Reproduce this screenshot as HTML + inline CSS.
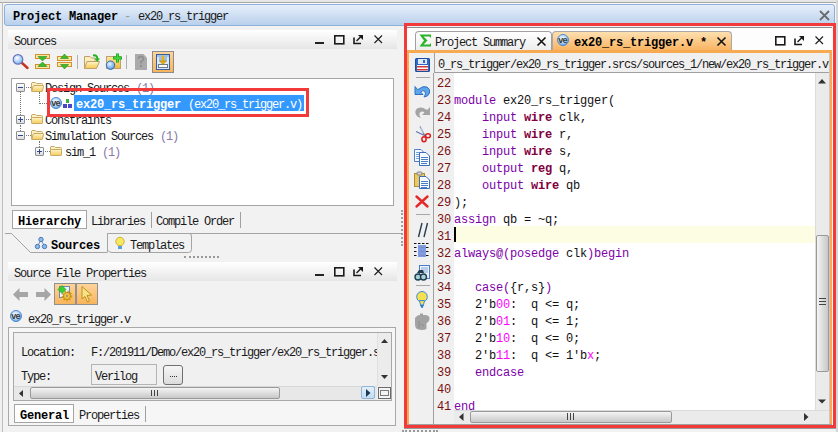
<!DOCTYPE html>
<html><head><meta charset="utf-8">
<style>
*{margin:0;padding:0;box-sizing:border-box}
html,body{width:838px;height:432px;overflow:hidden;background:#f0f0f0}
body{position:relative;font-family:"Liberation Mono",monospace;font-size:12px;color:#000}
.a{position:absolute}
.t{position:absolute;font:12px/12px "Liberation Mono",monospace;letter-spacing:-1.2px;white-space:pre;color:#1a1a1a}
.b{font-weight:bold;letter-spacing:-0.2px;color:#000}
.c{position:absolute;font:12px/12px "Liberation Mono",monospace;letter-spacing:-0.2px;white-space:pre;color:#111}
.ln{color:#7a1010;}
.kw{color:#7d00a8}
.kb{color:#800040;font-weight:bold}
.mg{color:#ff00ff}
.hdr{position:absolute;background:linear-gradient(#ffffff,#e6e6e6);}
svg{position:absolute;overflow:visible}
</style></head><body>
<svg width="0" height="0" style="position:absolute"><defs><radialGradient id="veg" cx="0.45" cy="0.4" r="0.6"><stop offset="0" stop-color="#ffffff"/><stop offset="0.6" stop-color="#b8daf8"/><stop offset="1" stop-color="#5a9ae0"/></radialGradient><linearGradient id="fgo" x1="0" y1="0" x2="0" y2="1"><stop offset="0" stop-color="#fff4c8"/><stop offset="1" stop-color="#f4cc58"/></linearGradient></defs></svg>

<!-- outer chrome -->
<div class="a" style="left:0;top:0;width:838px;height:2px;background:#e6e6e6"></div>
<div class="a" style="left:0;top:2px;width:838px;height:1px;background:#a8a8a8"></div>
<div class="a" style="left:2px;top:2px;width:1px;height:430px;background:#bdbdbd"></div>
<div class="a" style="left:3px;top:3px;width:833px;height:429px;background:#f2f2f2"></div><div class="a" style="left:3px;top:3px;width:833px;height:1px;background:#fdfdfd"></div>

<div class="a" style="left:836px;top:0;width:2px;height:432px;background:#d6d6d6"></div>
<!-- title box -->
<div class="a" style="left:4px;top:4px;width:831px;height:22px;border:1px solid #8fb0da;border-radius:3px;background:linear-gradient(#e6effa,#b9d0ec)"></div>
<div class="t b" style="left:13px;top:11px">Project Manager</div>
<div class="t" style="left:124px;top:11px;color:#9a9a9a">-</div>
<div class="t" style="left:138px;top:11px">ex20_rs_trigger</div>
<svg style="left:819px;top:10px" width="11" height="11"><path d="M1 1L10 10M10 1L1 10" stroke="#6b6b6b" stroke-width="1.8"/></svg>

<!-- ============ LEFT: Sources panel ============ -->
<div class="hdr" style="left:8px;top:30px;width:389px;height:19px"></div>
<div class="t" style="left:14px;top:36px">Sources</div>
<!-- header buttons -->
<div class="a" style="left:315px;top:42px;width:9px;height:2px;background:#222"></div>
<svg style="left:334px;top:35px" width="11" height="10"><rect x="0.8" y="0.8" width="9" height="8" fill="none" stroke="#1a1a1a" stroke-width="1.6"/></svg>
<svg style="left:353px;top:35px" width="11" height="10"><path d="M1 2.5V8.5H8" fill="none" stroke="#1a1a1a" stroke-width="1.6"/><path d="M3.5 6L8 1.5" stroke="#1a1a1a" stroke-width="1.4"/><path d="M5 0H10V5Z" fill="#1a1a1a"/></svg>
<svg style="left:374px;top:35px" width="9" height="9"><path d="M0.5 0.5L8 8M8 0.5L0.5 8" stroke="#1a1a1a" stroke-width="1.1"/></svg>

<!-- toolbar -->
<svg style="left:12px;top:53px" width="18" height="17"><defs><radialGradient id="mg1" cx="0.4" cy="0.35" r="0.7"><stop offset="0" stop-color="#ffffff"/><stop offset="1" stop-color="#6fb0ec"/></radialGradient></defs><path d="M9.5 9.5L15.5 15" stroke="#c83020" stroke-width="2.4" stroke-linecap="round"/><circle cx="6" cy="6.4" r="4.8" fill="url(#mg1)" stroke="#6a74c0" stroke-width="1.2"/></svg>
<svg style="left:35px;top:53px" width="16" height="17"><rect x="0.5" y="1.5" width="14" height="4" fill="#fde7a0" stroke="#d0922e"/><rect x="0.5" y="11.5" width="14" height="4" fill="#fde7a0" stroke="#d0922e"/><path d="M3 3.5H12L7.5 8Z" fill="#3cbc2c" stroke="#2a8a1a" stroke-width="0.6"/><path d="M3 13.5H12L7.5 9Z" fill="#3cbc2c" stroke="#2a8a1a" stroke-width="0.6"/></svg>
<svg style="left:57px;top:53px" width="16" height="17"><rect x="0.5" y="3.5" width="14" height="4" fill="#fde7a0" stroke="#d0922e"/><rect x="0.5" y="9.5" width="14" height="4" fill="#fde7a0" stroke="#d0922e"/><path d="M3.5 5.5H11.5L7.5 1Z" fill="#3cbc2c" stroke="#2a8a1a" stroke-width="0.6"/><path d="M3.5 11.5H11.5L7.5 16Z" fill="#3cbc2c" stroke="#2a8a1a" stroke-width="0.6"/></svg>
<div class="a" style="left:77px;top:55px;width:1px;height:14px;background:#b0b0b0"></div>
<svg style="left:84px;top:54px" width="17" height="16"><defs><linearGradient id="fg1" x1="0" y1="0" x2="0" y2="1"><stop offset="0" stop-color="#fff6c8"/><stop offset="1" stop-color="#f6c850"/></linearGradient></defs><path d="M0.5 2.5H6L7.5 4H11V14.5H0.5Z" fill="#fbeeb8" stroke="#bfa070"/><path d="M3 7.5H15.5L12.5 14.5H0.5Z" fill="url(#fg1)" stroke="#bfa070"/><path d="M9 1.5Q13 0.5 13.5 5" fill="none" stroke="#22b422" stroke-width="2"/><path d="M10.5 4.5H16L13.3 8Z" fill="#22b422"/></svg>
<svg style="left:105px;top:53px" width="18" height="17"><defs><linearGradient id="fg2" x1="0" y1="0" x2="0" y2="1"><stop offset="0" stop-color="#fbe9a0"/><stop offset="1" stop-color="#f0b838"/></linearGradient><radialGradient id="bg2" cx="0.4" cy="0.35" r="0.7"><stop offset="0" stop-color="#e8f4ff"/><stop offset="1" stop-color="#4e98e8"/></radialGradient></defs><rect x="1.5" y="3.5" width="14" height="12" fill="url(#fg2)" stroke="#c0a070"/><circle cx="5.5" cy="12.2" r="4.2" fill="url(#bg2)" stroke="#3a68b0"/><path d="M12.5 0.5V9.5M8 5H17" stroke="#1a9a1a" stroke-width="3"/><path d="M12.5 1V9M8.5 5H16.5" stroke="#3ce03c" stroke-width="1.6"/></svg>
<div class="a" style="left:126px;top:55px;width:1px;height:14px;background:#b0b0b0"></div>
<svg style="left:135px;top:54px" width="13" height="16"><path d="M0 0H8.5L12 4V16H0Z" fill="#aaaaaa"/><path d="M3.5 5Q3.5 2.5 6 2.5Q8.5 2.5 8.5 5Q8.5 6.5 6 7.5V9.5" fill="none" stroke="#8e8e8e" stroke-width="1.6"/><rect x="5" y="11" width="2" height="2" fill="#8e8e8e"/></svg>
<div class="a" style="left:152px;top:51px;width:22px;height:22px;background:linear-gradient(#fdd49a,#f9b45c);border:1px solid #8c8c8c"></div>
<svg style="left:156px;top:54px" width="14" height="16"><rect x="0.5" y="0.5" width="13" height="15" fill="#d6ecfa" stroke="#3c5c9c"/><rect x="1" y="1" width="12" height="2" fill="#9cc4e8"/><path d="M3 4H11M3 6H11" stroke="#7090b8"/><rect x="2.5" y="10.5" width="9" height="3" fill="#fff" stroke="#6a7a8a"/><path d="M7 1.5V8" stroke="#e8b010" stroke-width="2.2"/><path d="M3.5 7H10.5L7 10.5Z" fill="#e8b010" stroke="#b88008" stroke-width="0.6"/></svg>

<!-- tree box -->
<div class="a" style="left:11px;top:78px;width:383px;height:128px;background:#fff;border:1px solid #a5a5a5"></div>
<!-- dotted lines -->
<div class="a" style="left:20px;top:92px;width:1px;height:23px;border-left:1px dotted #777"></div>
<div class="a" style="left:26px;top:87px;width:5px;border-top:1px dotted #777"></div>
<div class="a" style="left:26px;top:119px;width:5px;border-top:1px dotted #777"></div>
<div class="a" style="left:20px;top:125px;width:1px;height:6px;border-left:1px dotted #777"></div>
<div class="a" style="left:26px;top:135px;width:5px;border-top:1px dotted #777"></div>
<div class="a" style="left:39px;top:92px;width:1px;height:12px;border-left:1px dotted #777"></div>
<div class="a" style="left:39px;top:103px;width:10px;border-top:1px dotted #777"></div>
<div class="a" style="left:39px;top:141px;width:1px;height:6px;border-left:1px dotted #777"></div>
<div class="a" style="left:45px;top:151px;width:5px;border-top:1px dotted #777"></div>
<!-- expanders -->
<div class="a" style="left:16px;top:83px;width:9px;height:9px;border:1px solid #8e8f8f;background:linear-gradient(#fff,#dcdcdc);border-radius:1px"></div>
<div class="a" style="left:18px;top:87px;width:5px;height:1px;background:#2c4a8c"></div>
<div class="a" style="left:16px;top:115px;width:9px;height:9px;border:1px solid #8e8f8f;background:linear-gradient(#fff,#dcdcdc);border-radius:1px"></div>
<div class="a" style="left:18px;top:119px;width:5px;height:1px;background:#2c4a8c"></div>
<div class="a" style="left:20px;top:117px;width:1px;height:5px;background:#2c4a8c"></div>
<div class="a" style="left:16px;top:131px;width:9px;height:9px;border:1px solid #8e8f8f;background:linear-gradient(#fff,#dcdcdc);border-radius:1px"></div>
<div class="a" style="left:18px;top:135px;width:5px;height:1px;background:#2c4a8c"></div>
<div class="a" style="left:35px;top:147px;width:9px;height:9px;border:1px solid #8e8f8f;background:linear-gradient(#fff,#dcdcdc);border-radius:1px"></div>
<div class="a" style="left:37px;top:151px;width:5px;height:1px;background:#2c4a8c"></div>
<div class="a" style="left:39px;top:149px;width:1px;height:5px;background:#2c4a8c"></div>
<!-- folders -->
<svg style="left:31px;top:81px" width="13" height="11"><path d="M1 1.5H4.5L5.5 2.5H10.5Q11.5 2.5 11.5 3.5V9.5Q11.5 10.5 10.5 10.5H1.5Q0.5 10.5 0.5 9.5V2Z" fill="#fbf0c0" stroke="#c8aa68"/><path d="M3 4.5H12Q12.8 4.5 12.5 5.5L11.5 9.8Q11.3 10.5 10.5 10.5H0.8L2.2 5.2Q2.4 4.5 3 4.5Z" fill="url(#fgo)" stroke="#c8aa68"/></svg>
<svg style="left:31px;top:113px" width="13" height="11"><path d="M1 1.5H4.5L5.5 2.5H10.5Q11.5 2.5 11.5 3.5V9.5Q11.5 10.5 10.5 10.5H1.5Q0.5 10.5 0.5 9.5V2Z" fill="#fbf0c0" stroke="#c8aa68"/><rect x="0.5" y="4.5" width="11" height="6" rx="1" fill="url(#fgo)" stroke="#c8aa68"/></svg>
<svg style="left:31px;top:129px" width="13" height="11"><path d="M1 1.5H4.5L5.5 2.5H10.5Q11.5 2.5 11.5 3.5V9.5Q11.5 10.5 10.5 10.5H1.5Q0.5 10.5 0.5 9.5V2Z" fill="#fbf0c0" stroke="#c8aa68"/><path d="M3 4.5H12Q12.8 4.5 12.5 5.5L11.5 9.8Q11.3 10.5 10.5 10.5H0.8L2.2 5.2Q2.4 4.5 3 4.5Z" fill="url(#fgo)" stroke="#c8aa68"/></svg>
<svg style="left:50px;top:145px" width="13" height="11"><path d="M1 1.5H4.5L5.5 2.5H10.5Q11.5 2.5 11.5 3.5V9.5Q11.5 10.5 10.5 10.5H1.5Q0.5 10.5 0.5 9.5V2Z" fill="#fbf0c0" stroke="#c8aa68"/><rect x="0.5" y="4.5" width="11" height="6" rx="1" fill="url(#fgo)" stroke="#c8aa68"/></svg>
<!-- tree text -->
<div class="t" style="left:45px;top:83px">Design Sources <span style="color:#8a7aa8;margin-left:1px">(1)</span></div>
<div class="t" style="left:45px;top:115px">Constraints</div>
<div class="t" style="left:45px;top:131px">Simulation Sources <span style="color:#8a7aa8;margin-left:1px">(1)</span></div>
<div class="t" style="left:65px;top:147px">sim_1 <span style="color:#8a7aa8;margin-left:1px">(1)</span></div>
<!-- selected row -->
<svg style="left:50px;top:97px" width="13" height="12"><circle cx="6" cy="6" r="5.5" fill="url(#veg)" stroke="#4f8ad0"/><text x="1.2" y="9.2" font-size="9" font-family="Liberation Sans" font-weight="bold" fill="#3a3a3a" letter-spacing="-0.6">ve</text></svg>
<svg style="left:63px;top:99px" width="10" height="10"><rect x="3" y="0" width="3" height="4" fill="#3cb43c"/><rect x="0" y="5" width="4" height="4" fill="#4848c8"/><rect x="5" y="5" width="4" height="4" fill="#4848c8"/></svg>
<div class="a" style="left:74px;top:95px;width:230px;height:16px;background:#3399ff"></div>
<div class="t" style="left:76px;top:99px;color:#fff"><span class="b" style="color:#fff">ex20_rs_trigger</span> <span style="margin-left:1px">(ex20_rs_trigger.v)</span></div>
<div class="a" style="left:47px;top:88px;width:262px;height:29px;border:3px solid #f23a3a"></div>

<!-- tab strip hierarchy -->
<div class="a" style="left:12px;top:210px;width:75px;height:19px;background:#fff;border:1px solid #a5a5a5"></div>
<div class="t b" style="left:18px;top:216px">Hierarchy</div>
<div class="t" style="left:91px;top:216px">Libraries</div>
<div class="a" style="left:151px;top:212px;width:1px;height:16px;background:#a0a0a0"></div>
<div class="t" style="left:156px;top:216px">Compile Order</div>
<div class="a" style="left:240px;top:212px;width:1px;height:16px;background:#a0a0a0"></div>
<div class="a" style="left:3px;top:234px;width:398px;height:24px;background:#f2f2f2"></div>
<svg style="left:0px;top:228px" width="402" height="30"><path d="M5 5.5H11.5L30.5 24.5H107.5M107.5 5.5H401" fill="none" stroke="#a4a4a4"/><path d="M107.5 24V5.5H189Q191.5 5.5 191.5 8V21.5Q191.5 24.5 188.5 24.5H112Q109 24.5 107.5 22" fill="none" stroke="#a4a4a4"/></svg>
<svg style="left:35px;top:237px" width="12" height="13"><path d="M6 3L2.5 9M6 3L9.5 9" stroke="#6a8fc0"/><circle cx="6" cy="2.5" r="2.2" fill="#8dbbe8" stroke="#4a78b8"/><circle cx="2.5" cy="9.5" r="2.2" fill="#8dbbe8" stroke="#4a78b8"/><circle cx="9.5" cy="9.5" r="2.2" fill="#8dbbe8" stroke="#4a78b8"/></svg>
<div class="t b" style="left:51px;top:240px">Sources</div>
<svg style="left:115px;top:237px" width="10" height="13"><circle cx="5" cy="4.5" r="4.2" fill="#f8e860" stroke="#c8b030"/><path d="M3 9H7V12H3Z" fill="#58a0e0"/></svg>
<div class="t" style="left:130px;top:240px">Templates</div>
<div class="a" style="left:184px;top:256px;width:35px;border-top:2px dotted #9a9a9a"></div>
<div class="a" style="left:401px;top:210px;width:2px;height:36px;border-left:2px dotted #a0a0a0"></div>

<!-- ============ Source File Properties ============ -->
<div class="hdr" style="left:8px;top:262px;width:389px;height:19px"></div>
<div class="t" style="left:14px;top:268px">Source File Properties</div>
<div class="a" style="left:315px;top:274px;width:9px;height:2px;background:#222"></div>
<svg style="left:334px;top:267px" width="11" height="10"><rect x="0.8" y="0.8" width="9" height="8" fill="none" stroke="#1a1a1a" stroke-width="1.6"/></svg>
<svg style="left:353px;top:267px" width="11" height="10"><path d="M1 2.5V8.5H8" fill="none" stroke="#1a1a1a" stroke-width="1.6"/><path d="M3.5 6L8 1.5" stroke="#1a1a1a" stroke-width="1.4"/><path d="M5 0H10V5Z" fill="#1a1a1a"/></svg>
<svg style="left:374px;top:267px" width="9" height="9"><path d="M0.5 0.5L8 8M8 0.5L0.5 8" stroke="#1a1a1a" stroke-width="1.1"/></svg>
<svg style="left:13px;top:288px" width="16" height="14"><path d="M0 6.5L6.5 0V4H15V9H6.5V13Z" fill="#a6a6a6"/></svg>
<svg style="left:36px;top:288px" width="16" height="14"><path d="M15 6.5L8.5 0V4H0V9H8.5V13Z" fill="#a6a6a6"/></svg>
<div class="a" style="left:54px;top:283px;width:22px;height:22px;background:linear-gradient(#fdd49a,#f9b45c);border:1px solid #909090"></div>
<div class="a" style="left:76px;top:283px;width:22px;height:22px;background:linear-gradient(#fdd49a,#f9b45c);border:1px solid #909090"></div>
<svg style="left:57px;top:285px" width="17" height="18"><rect x="2.5" y="1.5" width="10" height="11" fill="#eef4fb" stroke="#7088b0"/><circle cx="10" cy="11" r="4.2" fill="none" stroke="#d8a018" stroke-width="2.4" stroke-dasharray="1.6 1.2"/><circle cx="10" cy="11" r="3.6" fill="#f0c038" stroke="#b88010" stroke-width="0.8"/><circle cx="10" cy="11" r="1" fill="#8090a0"/><path d="M5 0.5L9 4.5L5 8.5L1 4.5Z" fill="#38d030" stroke="#20901a" stroke-width="0.6"/></svg>
<svg style="left:81px;top:286px" width="12" height="17"><path d="M1 0.5L10.5 9L6 9.5L8.5 15L6.5 16L4 10.5L1 13Z" fill="#f8e488" stroke="#c09018" stroke-width="1"/></svg>
<svg style="left:10px;top:310px" width="13" height="13"><circle cx="6" cy="6" r="5.5" fill="url(#veg)" stroke="#4f8ad0"/><text x="1.2" y="9.2" font-size="9" font-family="Liberation Sans" font-weight="bold" fill="#3a3a3a" letter-spacing="-0.6">ve</text></svg>
<div class="t" style="left:28px;top:314px">ex20_rs_trigger.v</div>

<!-- properties box -->
<div class="a" style="left:8px;top:327px;width:388px;height:99px;border:1px solid #a8a8a8;background:#f6f6f6"></div>
<div class="a" style="left:13px;top:332px;width:379px;height:69px;border:1px solid #a8a8a8;background:#f0f0f0"></div>
<div class="a" style="left:14px;top:333px;width:363px;height:53px;overflow:hidden">
 <div class="t" style="left:7px;top:14px">Location:</div>
 <div class="t" style="left:77px;top:14px">F:/201911/Demo/ex20_rs_trigger/ex20_rs_trigger.srcs</div>
 <div class="t" style="left:7px;top:38px">Type:</div>
 <div class="a" style="left:77px;top:31px;width:66px;height:21px;border:1px solid #b4b4b4;background:#f0f0f0"></div>
 <div class="t" style="left:81px;top:38px">Verilog</div>
 <div class="a" style="left:149px;top:32px;width:20px;height:20px;border:1px solid #707070;border-radius:3px;background:linear-gradient(#f6f6f6,#dcdcdc)"></div>
 <div class="a" style="left:156px;top:43px;width:7px;height:1px;border-top:1px dotted #333"></div>
</div>
<!-- v scroll -->
<div class="a" style="left:377px;top:333px;width:14px;height:53px;background:#ececec;border-left:1px solid #e0e0e0"></div>
<svg style="left:381px;top:339px" width="7" height="5"><path d="M0 4H7L3.5 0Z" fill="#333"/></svg>
<svg style="left:381px;top:375px" width="7" height="5"><path d="M0 0H7L3.5 4Z" fill="#333"/></svg>
<!-- h scroll -->
<div class="a" style="left:14px;top:386px;width:363px;height:14px;background:#e8e8e8;border-top:1px solid #d8d8d8"></div>
<svg style="left:19px;top:390px" width="5" height="7"><path d="M4 0V7L0 3.5Z" fill="#333"/></svg>
<div class="a" style="left:30px;top:387px;width:250px;height:12px;border:1px solid #9a9a9a;border-radius:2px;background:linear-gradient(#f4f4f4,#c8c8c8)"></div>
<div class="a" style="left:151px;top:390px;width:8px;height:6px;background:repeating-linear-gradient(90deg,#444 0 1px,transparent 1px 3px)"></div>
<div class="a" style="left:361px;top:386px;width:14px;height:13px;border:1px solid #8cb4dc;border-radius:2px;background:linear-gradient(#e4f0fa,#c4dcf0)"></div>
<svg style="left:366px;top:389px" width="5" height="8"><path d="M0 0V8L4.5 4Z" fill="#1a3a5a"/></svg>
<div class="a" style="left:378px;top:387px;width:13px;height:12px;border:1.5px solid #6a6a6a;background:#f4f4f4"></div>
<div class="a" style="left:380px;top:390px;width:9px;height:6px;border:1.5px solid #7a7a7a"></div>
<!-- bottom tabs -->
<div class="a" style="left:14px;top:404px;width:60px;height:19px;background:#fff;border:1px solid #a5a5a5"></div>
<div class="t b" style="left:20px;top:410px">General</div>
<div class="t" style="left:79px;top:410px">Properties</div>
<div class="a" style="left:145px;top:406px;width:1px;height:16px;background:#a0a0a0"></div>
<div class="a" style="left:402px;top:430px;width:36px;border-top:2px dotted #9a9a9a"></div>

<!-- ============ RIGHT: editor ============ -->
<div class="a" style="left:407px;top:26px;width:425px;height:399px;background:#f0f0f0"></div>
<div class="a" style="left:407px;top:27px;width:425px;height:1px;background:#909090"></div>
<div class="a" style="left:407px;top:28px;width:425px;height:22px;background:#fdfdfd"></div>
<!-- tabs -->
<div class="a" style="left:415px;top:31px;width:137px;height:20px;border:1px solid #a0a0a0;border-bottom:none;border-radius:4px 4px 0 0;background:linear-gradient(#ffffff,#ececec)"></div>
<svg style="left:419px;top:34px" width="13" height="13"><path d="M0.5 0.5H12V4L10.5 2.5H4.5L8.5 6.5L4.5 10.5H10.5L12 9V12.5H0.5L5 6.5Z" fill="#28b428"/></svg>
<div class="t" style="left:435px;top:37px">Project Summary</div>
<svg style="left:537px;top:37px" width="9" height="9"><path d="M0.5 0.5L8.5 8.5M8.5 0.5L0.5 8.5" stroke="#111" stroke-width="1.6"/></svg>
<div class="a" style="left:552px;top:31px;width:180px;height:22px;border:1px solid #a8a8a8;border-bottom:none;border-radius:4px 4px 0 0;background:linear-gradient(#fde0b0,#f9ac55)"></div>
<svg style="left:557px;top:34px" width="13" height="13"><circle cx="6" cy="6" r="5.5" fill="url(#veg)" stroke="#4f8ad0"/><text x="1.2" y="9.2" font-size="9" font-family="Liberation Sans" font-weight="bold" fill="#3a3a3a" letter-spacing="-0.6">ve</text></svg>
<div class="t b" style="left:574px;top:37px">ex20_rs_trigger.v *</div>
<svg style="left:717px;top:37px" width="9" height="9"><path d="M0.5 0.5L8.5 8.5M8.5 0.5L0.5 8.5" stroke="#111" stroke-width="1.6"/></svg>
<svg style="left:775px;top:36px" width="11" height="10"><rect x="0.8" y="0.8" width="9" height="8" fill="none" stroke="#1a1a1a" stroke-width="1.6"/></svg>
<svg style="left:794px;top:36px" width="11" height="10"><path d="M1 2.5V8.5H8" fill="none" stroke="#1a1a1a" stroke-width="1.6"/><path d="M3.5 6L8 1.5" stroke="#1a1a1a" stroke-width="1.4"/><path d="M5 0H10V5Z" fill="#1a1a1a"/></svg>
<svg style="left:815px;top:36px" width="9" height="9"><path d="M0.5 0.5L8 8M8 0.5L0.5 8" stroke="#1a1a1a" stroke-width="1.1"/></svg>
<!-- orange frame -->
<div class="a" style="left:407px;top:50px;width:425px;height:3px;background:#f8aa52"></div>
<div class="a" style="left:407px;top:50px;width:2px;height:375px;background:#f8aa52"></div>
<div class="a" style="left:829px;top:53px;width:1px;height:371px;background:#c8c8c8"></div><div class="a" style="left:830px;top:50px;width:2px;height:375px;background:#f8aa52"></div><div class="a" style="left:832px;top:26px;width:1px;height:399px;background:#fafafa"></div>
<!-- editor toolbar -->
<svg style="left:415px;top:58px" width="15" height="14"><rect x="0" y="0" width="15" height="14" rx="1.5" fill="#2f6bc8"/><rect x="0.5" y="0.5" width="14" height="13" rx="1.5" fill="none" stroke="#1d4e9e"/><rect x="3" y="1" width="9" height="5" fill="#dfe8f5"/><rect x="8" y="2" width="2" height="3" fill="#2f6bc8"/><rect x="2" y="7" width="11" height="6" fill="#fff"/><rect x="2" y="8" width="11" height="1.5" fill="#d23a3a"/><rect x="2" y="11" width="11" height="1.5" fill="#d23a3a"/></svg>
<div class="a" style="left:416px;top:77px;width:14px;height:1px;background:#a8a8a8"></div>
<svg style="left:414px;top:85px" width="17" height="14"><path d="M5 4Q9 0.5 13 2Q16.5 4 15.5 8Q14.5 11.5 10 12Q12.5 9 11 6.5Q9 4.5 6.5 7L9 9.5H1V1.5L3.5 4.5Z" fill="#5da5e8" stroke="#2f72c4" stroke-width="1"/></svg>
<svg style="left:414px;top:106px" width="17" height="13"><path d="M12 3.5Q8 0.5 4 2Q0.5 4 1.5 7.5Q2.5 11 7 12Q4.5 9 6 6.5Q8 4.5 10.5 6.5L8 9H16V1L13.5 3.8Z" fill="#a4a4a4"/></svg>
<svg style="left:414px;top:124px" width="17" height="19"><path d="M6 2.5L11 12M2 7.5L10.5 11.5" stroke="#5a74a8" stroke-width="1.1" fill="none"/><path d="M6.5 3.5L9.5 9" stroke="#dde4f0" stroke-width="0.7"/><ellipse cx="10" cy="15.2" rx="2.1" ry="2.5" fill="none" stroke="#e01c1c" stroke-width="1.5"/><ellipse cx="14" cy="11.8" rx="2.4" ry="2" fill="none" stroke="#e01c1c" stroke-width="1.5"/></svg>
<svg style="left:414px;top:149px" width="17" height="18"><path d="M0.5 0.5H7L9.5 3V12.5H0.5Z" fill="#f6f9fd" stroke="#5080c8"/><path d="M2 3.5H6M2 5.5H7M2 7.5H7M2 9.5H6" stroke="#7aa0d8" stroke-width="1"/><path d="M5.5 3.5H12L15.5 7V16.5H5.5Z" fill="#f8fbff" stroke="#3a6cc0"/><path d="M7 8.5H14M7 10.5H14M7 12.5H14M7 14.5H13" stroke="#4a7cc8" stroke-width="1"/></svg>
<svg style="left:414px;top:171px" width="17" height="18"><rect x="0.5" y="2.5" width="10" height="13" fill="#ecc860" stroke="#b08c30"/><rect x="3" y="1" width="5" height="3" rx="1" fill="#d8d8d8" stroke="#808080"/><path d="M5.5 5.5H12L15.5 9V17.5H5.5Z" fill="#f8fbff" stroke="#3a6cc0"/><path d="M7 10.5H14M7 12.5H14M7 14.5H14M7 16.5H13" stroke="#4a7cc8" stroke-width="1"/></svg>
<svg style="left:415px;top:195px" width="14" height="13"><path d="M1.5 1.5L12.5 11.5M12.5 1.5L1.5 11.5" stroke="#e42a2a" stroke-width="2.4" stroke-linecap="round"/></svg>
<div class="a" style="left:416px;top:214px;width:14px;height:1px;background:#a8a8a8"></div>
<svg style="left:417px;top:222px" width="12" height="16"><path d="M5 1L1.5 15M10.5 1L7 15" stroke="#2a3a50" stroke-width="1.4"/></svg>
<svg style="left:414px;top:242px" width="16" height="17"><path d="M0 1.5H16M0 5.5H16M0 9.5H16M0 13.5H16" stroke="#111" stroke-width="1.2" stroke-dasharray="2.5 1.5"/><rect x="4" y="3" width="8" height="12" fill="#7c9ce6"/><path d="M5.5 5.5H10.5M5.5 9.5H10.5M5.5 13.5H10.5" stroke="#8a8ab0" stroke-width="1"/></svg>
<svg style="left:414px;top:265px" width="17" height="16"><rect x="5.5" y="0.5" width="10" height="13" fill="#eef3fb" stroke="#4a7cc8"/><path d="M7 3H14M7 5H14M7 7H14" stroke="#6a94d0" stroke-width="0.8"/><circle cx="4" cy="12" r="3" fill="#a8d0d8" stroke="#1e3e4e" stroke-width="1.4"/><circle cx="9.5" cy="12" r="3" fill="#a8d0d8" stroke="#1e3e4e" stroke-width="1.4"/><path d="M3 8L5 5H9L10 8" fill="#1e3e4e"/></svg>
<div class="a" style="left:416px;top:285px;width:14px;height:1px;background:#a8a8a8"></div>
<svg style="left:416px;top:291px" width="13" height="18"><circle cx="6" cy="5.8" r="5.3" fill="#f4e050" stroke="#3c8ad8" stroke-width="1"/><path d="M3.5 9.5L4.5 14H7.5L8.5 9.5Z" fill="#f4e050" stroke="#3c8ad8"/><path d="M4 14H8L6.5 17H5.5Z" fill="#2a78d0"/></svg>
<svg style="left:414px;top:313px" width="17" height="18"><path d="M2 4Q3 2 6 2V0.5H9V2H11Q15 2 15.5 5Q15.5 9 12.5 10V16Q8 18 3 16Q1 15 1 11V5Z" fill="#a2a2a2"/><path d="M5 8V15M7 11L10 13" stroke="#888" stroke-width="0.8"/></svg>

<!-- path bar -->
<div class="a" style="left:434px;top:53px;width:395px;height:20px;background:#f0f0f0;border-left:1px solid #a0a0a0;border-bottom:1px solid #a0a0a0"></div>
<div class="a" style="left:435px;top:53px;width:394px;height:19px;overflow:hidden">
 <div class="t" style="left:3px;top:6px">0_rs_trigger/ex20_rs_trigger.srcs/sources_1/new/ex20_rs_trigger.v</div>
</div>

<!-- line number column & code -->
<div class="a" style="left:433px;top:73px;width:1px;height:351px;background:#a0a0a0"></div>
<div class="a" style="left:434px;top:73px;width:20px;height:351px;background:#f0f0f0"></div>
<div class="a" style="left:454px;top:73px;width:361px;height:337px;background:#fff"></div>
<div class="a" style="left:454px;top:226px;width:361px;height:17px;background:#fdfde3"></div>
<div class="a" style="left:454px;top:227px;width:2px;height:15px;background:#000"></div>

<div class="a" style="left:437px;top:73px;width:380px;height:337px;overflow:hidden">
<div class="c ln" style="left:0;top:5px">22</div>
<div class="c ln" style="left:0;top:22px">23</div><div class="c kw" style="left:17px;top:22px">module <span style="color:#111">ex20_rs_trigger(</span></div>
<div class="c ln" style="left:0;top:39px">24</div><div class="c kw" style="left:17px;top:39px">    input <span class="kb">wire</span> <span style="color:#111">clk,</span></div>
<div class="c ln" style="left:0;top:56px">25</div><div class="c kw" style="left:17px;top:56px">    input <span class="kb">wire</span> <span style="color:#111">r,</span></div>
<div class="c ln" style="left:0;top:73px">26</div><div class="c kw" style="left:17px;top:73px">    input <span class="kb">wire</span> <span style="color:#111">s,</span></div>
<div class="c ln" style="left:0;top:90px">27</div><div class="c kw" style="left:17px;top:90px">    output <span class="kb">reg</span> <span style="color:#111">q,</span></div>
<div class="c ln" style="left:0;top:107px">28</div><div class="c kw" style="left:17px;top:107px">    output <span class="kb">wire</span> <span style="color:#111">qb</span></div>
<div class="c ln" style="left:0;top:124px">29</div><div class="c" style="left:17px;top:124px">);</div>
<div class="c ln" style="left:0;top:141px">30</div><div class="c kw" style="left:17px;top:141px">assign <span style="color:#111">qb = ~q;</span></div>
<div class="c ln" style="left:0;top:158px">31</div>
<div class="c ln" style="left:0;top:175px">32</div><div class="c kw" style="left:17px;top:175px">always@(posedge <span style="color:#111">clk</span>)begin</div>
<div class="c ln" style="left:0;top:192px">33</div>
<div class="c ln" style="left:0;top:209px">34</div><div class="c kw" style="left:17px;top:209px">   case(<span style="color:#111">{r,s}</span>)</div>
<div class="c ln" style="left:0;top:226px">35</div><div class="c" style="left:17px;top:226px">   2'b<span class="mg">00</span>:  q &lt;= q;</div>
<div class="c ln" style="left:0;top:243px">36</div><div class="c" style="left:17px;top:243px">   2'b<span class="mg">01</span>:  q &lt;= 1;</div>
<div class="c ln" style="left:0;top:260px">37</div><div class="c" style="left:17px;top:260px">   2'b<span class="mg">10</span>:  q &lt;= 0;</div>
<div class="c ln" style="left:0;top:277px">38</div><div class="c" style="left:17px;top:277px">   2'b<span class="mg">11</span>:  q &lt;= 1'b<span class="mg">x</span>;</div>
<div class="c ln" style="left:0;top:294px">39</div><div class="c kw" style="left:17px;top:294px">   endcase</div>
<div class="c ln" style="left:0;top:311px">40</div>
<div class="c ln" style="left:0;top:328px">41</div><div class="c kw" style="left:17px;top:328px">end</div>
</div>

<!-- editor v scroll -->
<div class="a" style="left:815px;top:73px;width:14px;height:337px;background:#ebebeb;border-left:1px solid #dcdcdc"></div>
<svg style="left:818px;top:79px" width="8" height="5"><path d="M0 4.5H8L4 0Z" fill="#333"/></svg>
<div class="a" style="left:816px;top:235px;width:13px;height:137px;border:1px solid #9a9a9a;border-radius:2px;background:linear-gradient(90deg,#f4f4f4,#c8c8c8)"></div>
<div class="a" style="left:819px;top:298px;width:7px;height:8px;background:repeating-linear-gradient(#444 0 1px,transparent 1px 3px)"></div>
<svg style="left:818px;top:399px" width="8" height="5"><path d="M0 0.5H8L4 4.5Z" fill="#333"/></svg>
<!-- editor h scroll -->
<div class="a" style="left:454px;top:410px;width:375px;height:14px;background:#ebebeb;border-top:1px solid #dcdcdc"></div>
<svg style="left:459px;top:413px" width="5" height="8"><path d="M4.5 0V8L0 4Z" fill="#333"/></svg>
<div class="a" style="left:470px;top:411px;width:202px;height:12px;border:1px solid #9a9a9a;border-radius:2px;background:linear-gradient(#f4f4f4,#c8c8c8)"></div>
<div class="a" style="left:567px;top:413px;width:8px;height:7px;background:repeating-linear-gradient(90deg,#444 0 1px,transparent 1px 3px)"></div>
<svg style="left:804px;top:413px" width="5" height="8"><path d="M0 0V8L4.5 4Z" fill="#333"/></svg>
<div class="a" style="left:407px;top:424px;width:425px;height:1px;background:#a0a0a0"></div>

<!-- red highlight box -->
<div class="a" style="left:404px;top:23px;width:432px;height:405px;border:3px solid #f23a3a"></div>
<div class="a" style="left:404px;top:428px;width:432px;height:1px;background:#9a9a9a"></div>

</body></html>
